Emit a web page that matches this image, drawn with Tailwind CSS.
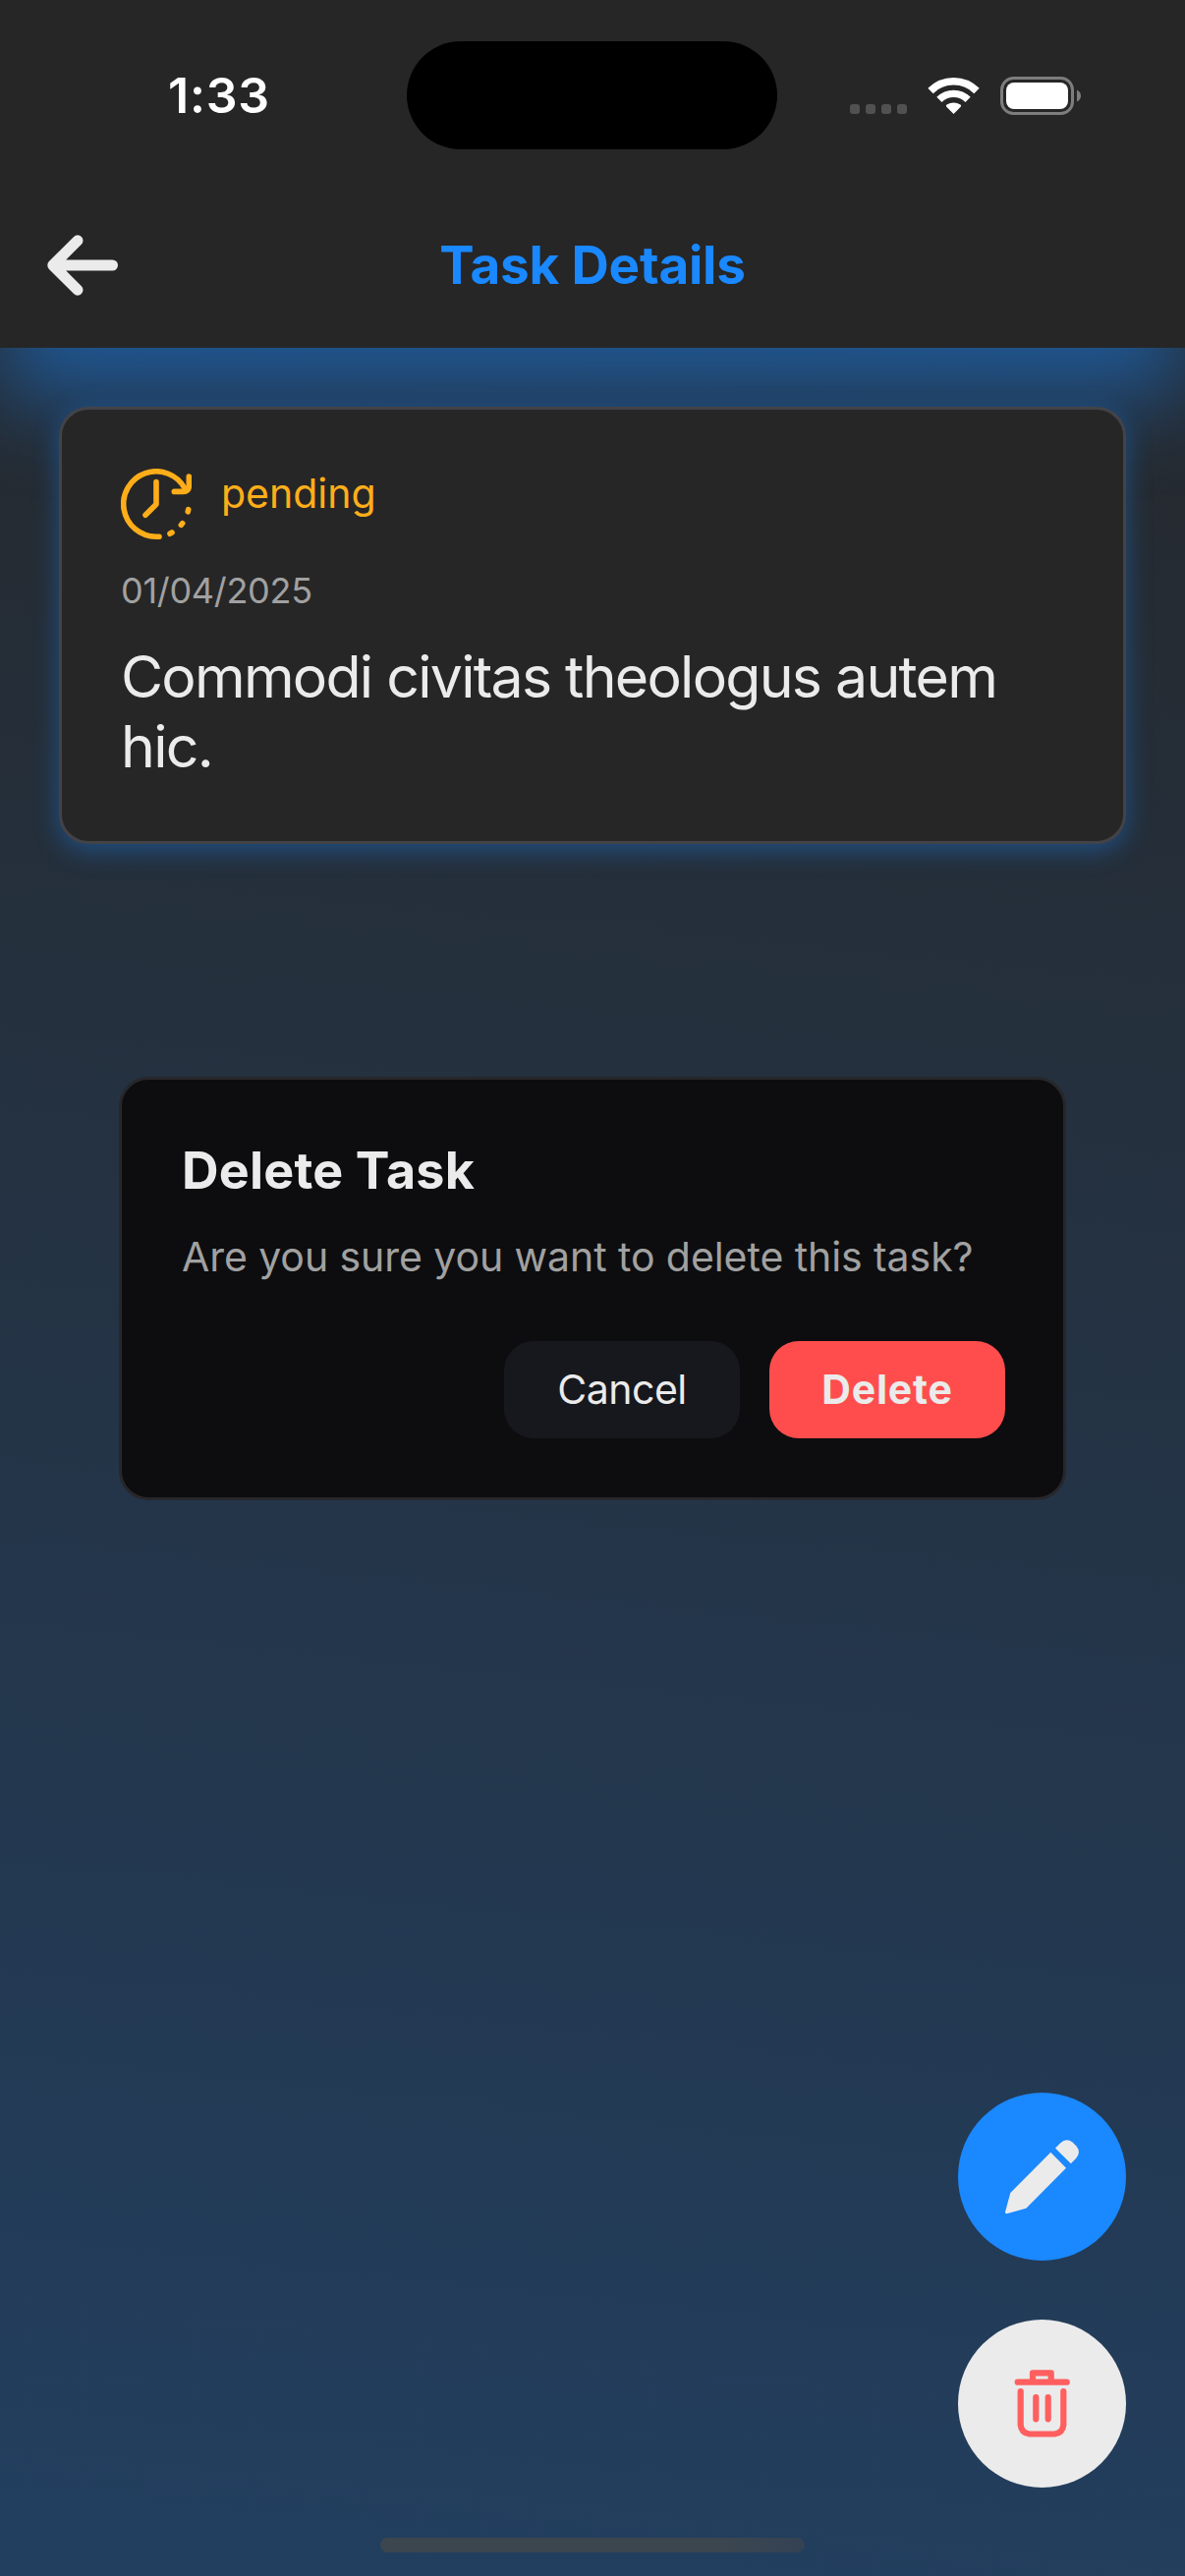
<!DOCTYPE html>
<html lang="en">
<head>
<meta charset="utf-8">
<title>Task Details</title>
<script src="https://cdn.jsdelivr.net/npm/@tailwindcss/browser@4"></script>
</head>
<body>
<div class="relative flex h-[2622px] w-[1206px] flex-col overflow-hidden bg-linear-[186deg,#262626,#223f60] font-['Inter',sans-serif] text-[#ebebeb]">

  <header class="flex h-[354px] shrink-0 flex-col bg-[#262626] shadow-[0_54px_84px_0_rgba(26,136,255,0.48)]">
    <!-- status bar -->
    <div class="grid h-[186px] grid-cols-[414px_377px_1fr] pt-[42px] text-white">
      <div class="flex h-[110px] items-center pl-[171px] text-[50px] leading-none font-semibold"><span class="tracking-[0.8px]">1:33</span></div>
      <div class="h-[110px] rounded-full bg-black"></div>
      <div class="flex h-[110px] items-center pl-[74px]">
        <div class="flex gap-[6px] pt-[28px]">
          <i class="size-[10px] rounded-[3px] bg-[#515151]"></i><i class="size-[10px] rounded-[3px] bg-[#515151]"></i><i class="size-[10px] rounded-[3px] bg-[#515151]"></i><i class="size-[10px] rounded-[3px] bg-[#515151]"></i>
        </div>
        <svg class="ml-[21px] h-[38px] w-[53px]" viewBox="0 0 53 38" fill="none">
          <path d="M3 14.5A33.2 33.2 0 0 1 50 14.5" stroke="#fff" stroke-width="7.6"/>
          <path d="M11.9 23.4A20.6 20.6 0 0 1 41.1 23.4" stroke="#fff" stroke-width="7.4"/>
          <path d="M26.5 38L19.3 30.8Q18.3 29.5 19.5 28.5Q26.5 24.5 33.5 28.5Q34.7 29.5 33.7 30.8Z" fill="#fff"/>
        </svg>
        <svg class="ml-[21px] h-[39px] w-[84px]" viewBox="0 0 84 39" fill="none">
          <rect x="1.5" y="1.5" width="72" height="36" rx="12" stroke="#7d7d7d" stroke-width="3"/>
          <rect x="6" y="6" width="63" height="27" rx="8" fill="#fff"/>
          <path d="M78 13.5Q82 15.5 82 19.5T78 25.5Z" fill="#7d7d7d"/>
        </svg>
      </div>
    </div>
    <!-- navigation bar -->
    <div class="grid h-[168px] grid-cols-[300px_1fr_300px] items-center">
      <svg class="ml-[48px] h-[62px] w-[72px]" viewBox="0 0 72 62" fill="none" stroke="#ebebeb" stroke-width="11" stroke-linecap="round" stroke-linejoin="round"><path d="M66.5 31H6M31 5.8L5.8 31L31 56.2"/></svg>
      <h1 class="text-center text-[53px] leading-none font-[650] tracking-[-0.2px] text-[#1a88ff]">Task Details</h1>
    </div>
  </header>

  <main class="px-[60px] pt-[60px]">
    <article class="h-[445px] rounded-[30px] border-[3px] border-[#434347] bg-[#262626] px-[60px] pt-[60px] shadow-[0_6px_26px_0_rgba(26,136,255,0.38)]">
      <div class="flex h-[72px] items-start gap-[30px] text-[#ffae1a]">
        <svg class="size-[72px]" viewBox="0 0 72 72" fill="none" stroke="currentColor" stroke-width="5.6" stroke-linecap="round" stroke-linejoin="round">
          <path d="M39 69.2H36A33.2 33.2 0 1 1 65 20"/>
          <path d="M69.3 8V18Q69 23.4 63.5 23.4H54.3"/>
          <path d="M36 13.5V36.2L25 47.2"/>
          <path d="M68.7 41.7L68.2 43.8M62.7 55.6L61.3 57.4M52 65L50 66.2"/>
        </svg>
        <span class="text-[41px] leading-[50px]">pending</span>
      </div>
      <p class="mt-[31px] text-[36px] leading-[43px] tracking-[-0.3px] text-[#a1a1a1]">01/04/2025</p>
      <h2 class="mt-[30px] text-[59px] leading-[71px] tracking-[-1.75px]">Commodi civitas theologus autem<br>hic.</h2>
    </article>
  </main>

  <!-- floating actions -->
  <div class="absolute right-[60px] bottom-[90px] flex flex-col gap-[60px]">
    <button class="size-[171px] rounded-full bg-[#1a88ff]">
      <svg class="size-[171px]" viewBox="0 0 171 171" fill="#ebebeb">
        <path d="M94.3 60.7L110 76.7L69.3 117.7L49.5 123.2Q47.8 123.2 48 121.5L53.3 102Z"/>
        <path d="M99 56.5L104 51.5Q110 45.5 116.5 50.5L120.5 54.5Q125.5 60.5 120 67L114.8 72.2Z"/>
      </svg>
    </button>
    <button class="size-[171px] rounded-full bg-[#ebebeb]">
      <svg class="size-[171px]" viewBox="0 0 171 171" fill="none" stroke="#ff5f5f" stroke-width="6.2" stroke-linecap="round" stroke-linejoin="round">
        <path d="M60.7 63.7H110.7M76 63V54.3H94.7V63"/>
        <path d="M63.7 73V107.3Q64.7 115.5 72.7 116.5H98.3Q106.3 115.5 107.3 107.3V73"/>
        <path d="M79.3 79V101.3M91.7 79V101.3"/>
      </svg>
    </button>
  </div>

  <!-- confirmation dialog -->
  <section class="absolute top-[1096px] left-[121px] h-[431px] w-[964px] rounded-[30px] border-[3px] border-[#27272b] bg-[#0d0d0f] pr-[59px] pl-[61px] pt-[61px]">
    <h3 class="text-[52px] leading-[64px] font-bold tracking-[0.2px]">Delete Task</h3>
    <p class="mt-[30px] text-[41px] leading-[50px] tracking-[-0.07px] text-[#a1a1a1]">Are you sure you want to delete this task?</p>
    <div class="mt-[61px] flex justify-end gap-[30px] text-[41px]">
      <button class="h-[99px] w-[240px] rounded-[30px] bg-[#17181d] tracking-[-0.5px]">Cancel</button>
      <button class="h-[99px] w-[240px] rounded-[30px] bg-[#ff4d4d] font-bold tracking-[0.8px]">Delete</button>
    </div>
  </section>

  <div class="absolute bottom-[24px] left-[387px] h-[15px] w-[432px] rounded-full bg-linear-to-r from-[#3c464f] from-80% to-[#334254]"></div>
</div>
</body>
</html>
